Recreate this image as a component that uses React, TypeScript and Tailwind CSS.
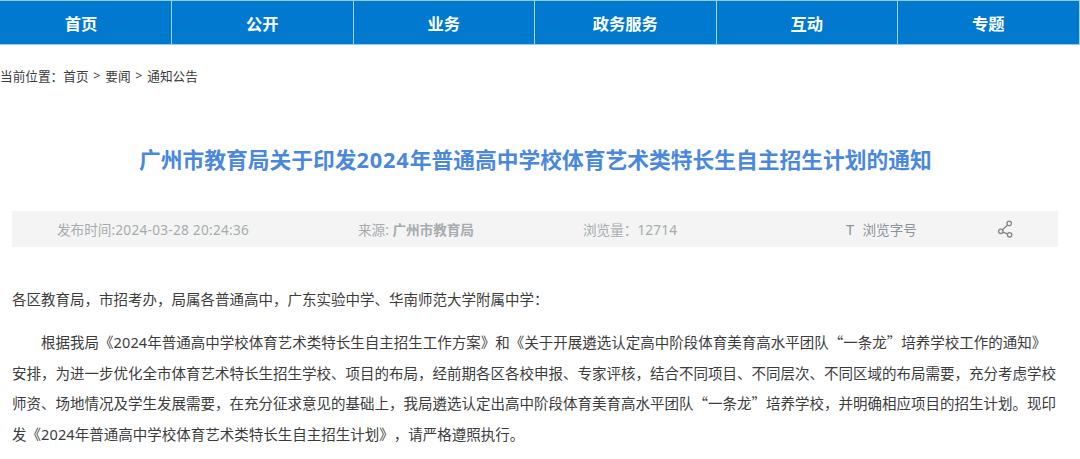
import type { ReactNode } from "react";

const navItems = ["首页", "公开", "业务", "政务服务", "互动", "专题"];

function Num({ children, className = "" }: { children: ReactNode; className?: string }) {
  return <span className={`font-['Noto_Sans'] leading-none ${className}`}>{children}</span>;
}

function Nav() {
  return (
    <nav className="flex h-[45px] overflow-hidden border-t border-b border-[#8fcdf0] bg-[#0079cf] text-[16.3px] font-bold text-white">
      {navItems.map((item, i) => (
        <a
          key={item}
          className={`flex shrink-0 items-center justify-center border-r border-[#a3d5f3] pt-px ${
            i === 0 ? "w-[172px] pr-[9px]" : "w-[181.5px]"
          }`}
        >
          {item}
        </a>
      ))}
    </nav>
  );
}

function ShareIcon() {
  return (
    <svg width="17" height="19" viewBox="0 0 17 19" fill="none" stroke="#858585" strokeWidth="1.3">
      <circle cx="12.2" cy="3.4" r="2.2" />
      <circle cx="3.8" cy="11.3" r="2.2" />
      <circle cx="12.6" cy="14.8" r="2.2" />
      <path d="M10.6 4.9 5.4 9.7M5.9 12.1l4.6 1.8" />
    </svg>
  );
}

function MetaBar() {
  return (
    <div className="ml-3 mt-9 flex h-9 w-[1046px] items-center bg-[#f4f4f4] pl-[45px] text-[13.6px] whitespace-nowrap text-[#a6acae]">
      <div className="w-[301px]">
        发布时间<Num className="tracking-[0.28px]">:2024-03-28 20:24:36</Num>
      </div>
      <div className="w-[225px]">
        来源<Num>: </Num>
        <b>广州市教育局</b>
      </div>
      <div className="w-[263px]">
        浏览量：<Num className="tracking-[0.2px]">12714</Num>
      </div>
      <div className="flex w-[151px] items-center text-[#8b9498]">
        <Num className="w-[16.5px] text-[14.5px]">T</Num>浏览字号
      </div>
      <ShareIcon />
    </div>
  );
}

export default function App() {
  return (
    <main className="h-[459px] w-[1080px] overflow-hidden bg-white font-['Noto_Sans_CJK_SC',sans-serif] text-[#3c3c3c] [text-spacing-trim:space-all]">
      <Nav />
      <div className="mt-5 flex h-5 items-center text-[12.67px] whitespace-pre">
        当前位置：首页<Num className="w-[16.7px] text-center">&gt;</Num>要闻
        <Num className="w-[16.7px] text-center">&gt;</Num>通知公告
      </div>
      <h1 className="mt-[57px] h-[33px] pl-[139px] text-[21.75px] leading-[33px] font-bold whitespace-nowrap text-[#4a88e0]">
        广州市教育局关于印发<Num className="tracking-[0.85px]">2024</Num>
        年普通高中学校体育艺术类特长生自主招生计划的通知
      </h1>
      <MetaBar />
      <article className="pt-[37px] pl-3 text-[14.5px] leading-[30.4px] whitespace-nowrap">
        <p>各区教育局，市招考办，局属各普通高中，广东实验中学、华南师范大学附属中学：</p>
        <p className="mt-[13px] indent-[29px]">
          根据我局《<Num className="tracking-[0.15px]">2024</Num>年普通高中学校体育艺术类特长生自主招生工作方案》和《关于开展遴选认定高中阶段体育美育高水平团队“一条龙”培养学校工作的通知》
        </p>
        <p>安排，为进一步优化全市体育艺术特长生招生学校、项目的布局，经前期各区各校申报、专家评核，结合不同项目、不同层次、不同区域的布局需要，充分考虑学校</p>
        <p>师资、场地情况及学生发展需要，在充分征求意见的基础上，我局遴选认定出高中阶段体育美育高水平团队“一条龙”培养学校，并明确相应项目的招生计划。现印</p>
        <p>
          发《<Num className="tracking-[0.15px]">2024</Num>年普通高中学校体育艺术类特长生自主招生计划》，请严格遵照执行。
        </p>
      </article>
    </main>
  );
}
